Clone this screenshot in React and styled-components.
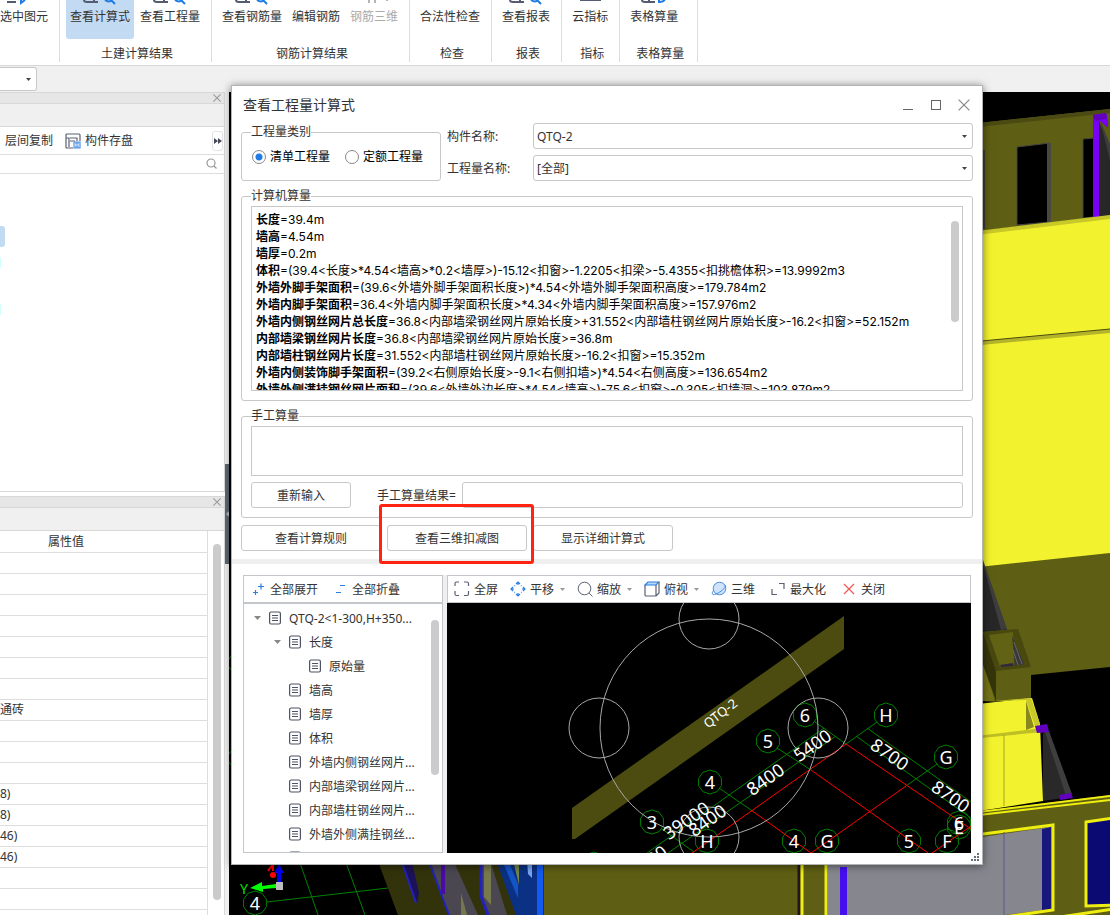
import { useState } from 'react'
import styled, { createGlobalStyle, css } from 'styled-components'

const ribbonGroups = [
	{
		name: '',
		width: 60,
		flush: true,
		buttons: [{ text: '选中图元', icon: 'pick' }],
	},
	{
		name: '土建计算结果',
		buttons: [
			{ text: '查看计算式', icon: 'search', active: true },
			{ text: '查看工程量', icon: 'search' },
		],
	},
	{
		name: '钢筋计算结果',
		buttons: [
			{ text: '查看钢筋量', icon: 'search' },
			{ text: '编辑钢筋', icon: 'none' },
			{ text: '钢筋三维', icon: 'bars', disabled: true },
		],
	},
	{ name: '检查', buttons: [{ text: '合法性检查', icon: 'none' }] },
	{ name: '报表', buttons: [{ text: '查看报表', icon: 'search' }] },
	{ name: '指标', buttons: [{ text: '云指标', icon: 'cloud' }] },
	{
		name: '表格算量',
		width: 78,
		buttons: [{ text: '表格算量', icon: 'sheet' }],
	},
]

const propertyRows = [
	'', '', '', '', '', '', '', '通砖', '', '', '',
	'8)', '8)', '46)', '46)', '', '', '',
]

const reportLines = [
	['长度', '39.4m'],
	['墙高', '4.54m'],
	['墙厚', '0.2m'],
	['体积', '(39.4<长度>*4.54<墙高>*0.2<墙厚>)-15.12<扣窗>-1.2205<扣梁>-5.4355<扣挑檐体积>=13.9992m3'],
	['外墙外脚手架面积', '(39.6<外墙外脚手架面积长度>)*4.54<外墙外脚手架面积高度>=179.784m2'],
	['外墙内脚手架面积', '36.4<外墙内脚手架面积长度>*4.34<外墙内脚手架面积高度>=157.976m2'],
	['外墙内侧钢丝网片总长度', '36.8<内部墙梁钢丝网片原始长度>+31.552<内部墙柱钢丝网片原始长度>-16.2<扣窗>=52.152m'],
	['内部墙梁钢丝网片长度', '36.8<内部墙梁钢丝网片原始长度>=36.8m'],
	['内部墙柱钢丝网片长度', '31.552<内部墙柱钢丝网片原始长度>-16.2<扣窗>=15.352m'],
	['外墙内侧装饰脚手架面积', '(39.2<右侧原始长度>-9.1<右侧扣墙>)*4.54<右侧高度>=136.654m2'],
	['外墙外侧满挂钢丝网片面积', '(39.6<外墙外边长度>*4.54<墙高>)-75.6<扣窗>-0.305<扣墙洞>=103.879m2'],
]

const treeItems = [
	{ text: 'QTQ-2<1-300,H+350...', level: 0, open: true },
	{ text: '长度', level: 1, open: true },
	{ text: '原始量', level: 2 },
	{ text: '墙高', level: 1 },
	{ text: '墙厚', level: 1 },
	{ text: '体积', level: 1 },
	{ text: '外墙内侧钢丝网片...', level: 1 },
	{ text: '内部墙梁钢丝网片...', level: 1 },
	{ text: '内部墙柱钢丝网片...', level: 1 },
	{ text: '外墙外侧满挂钢丝...', level: 1 },
	{ text: '外墙装饰面积', level: 1 },
]

const viewTools = [
	{ text: '全屏', icon: 'full' },
	{ text: '平移', icon: 'move', menu: true },
	{ text: '缩放', icon: 'zoom', menu: true },
	{ text: '俯视', icon: 'cube', menu: true },
	{ text: '三维', icon: 'sphere' },
	{ text: '最大化', icon: 'max', apart: true },
	{ text: '关闭', icon: 'close', apart: true },
]

const axisMarks = [
	['6', 805, 715], ['H', 886, 715], ['5', 768, 741], ['G', 946, 757],
	['4', 710, 782], ['3', 652, 822], ['H', 707, 841], ['4', 794, 841],
	['G', 827, 841], ['5', 909, 841], ['F', 947, 841], ['6', 959, 823], ['E', 959, 827],
]

const dimensions = [
	['5400', 812, 745, -35], ['8400', 765, 779, -35], ['39000', 686, 820, -35],
	['8400', 707, 820, -35], ['8400', 648, 861, -35],
	['8700', 890, 754, 35], ['8700', 951, 796, 35],
]

const octagon = (x, y, r) =>
	Array.from({ length: 10 }, (_, i) => {
		const a = (Math.PI / 5) * i + 0.3
		return `${x + r * Math.cos(a)},${y + r * Math.sin(a)}`
	}).join(' ')

const RibbonIcon = ({ type }) => (
	<svg width='34' height='8' viewBox='0 0 34 8' fill='none' strokeWidth='2'>
		{type === 'search' && (
			<>
				<path d='M1 0Q1 2 4 2H15M11 0V2' stroke='#555b70' />
				<path d='M22 0Q26 3 29 0M28 0L32 4' stroke='#1f7be6' />
			</>
		)}
		{type === 'pick' && (
			<>
				<path d='M0 2H9' stroke='#555b70' />
				<path d='M14 -1V3L18 0' stroke='#1f7be6' />
			</>
		)}
		{type === 'bars' && <path d='M12 0V3M18 0V3M30 0V1' stroke='#b5b5b5' />}
		{type === 'cloud' && <path d='M7 0H28' stroke='#555b70' />}
		{type === 'sheet' && (
			<>
				<path d='M5 0Q5 2 8 2H18M12 0V2' stroke='#555b70' />
				<path d='M22 -1V2Q27 2 28 -1' stroke='#1f7be6' />
			</>
		)}
	</svg>
)

const Cross = ({ size = 8, color = '#999', stroke = 1.3 }) => (
	<svg width={size} height={size} viewBox='0 0 10 10' fill='none' stroke={color} strokeWidth={stroke}>
		<path d='M0.5 0.5L9.5 9.5M9.5 0.5L0.5 9.5' />
	</svg>
)

const Caret = ({ color = '#444', size = 5, height = 3 }) => (
	<svg width={size} height={height} viewBox='0 0 6 3' preserveAspectRatio='none'>
		<path d='M0 0H6L3 3Z' fill={color} />
	</svg>
)

const ToolIcon = ({ type }) => (
	<svg width='16' height='16' viewBox='0 0 16 16' fill='none' stroke='#5b6172' strokeWidth='1.2'>
		{type === 'full' && (
			<path d='M1 5V2.5Q1 1 2.5 1H5M10 1H13Q14.5 1 14.5 2.5V5M14.5 10V13Q14.5 14.5 13 14.5H10M5 14.5H2.5Q1 14.5 1 13V10' />
		)}
		{type === 'move' && (
			<path
				stroke='#2b7fe0'
				d='M8 1V4M6 3L8 1L10 3M8 15V12M6 13L8 15L10 13M1 8H4M3 6L1 8L3 10M15 8H12M13 6L15 8L13 10M4.500 5L5 4.500M11.500 5L11 4.500M4.500 11L5 11.500M11.500 11L11 11.500'
			/>
		)}
		{type === 'zoom' && (
			<>
				<circle cx='7.500' cy='7.500' r='6.300' strokeWidth='1' />
				<path d='M12 12L15.500 15.500' strokeWidth='1' />
			</>
		)}
		{type === 'cube' && (
			<>
				<path d='M1 4L4 1H15L12 4Z' fill='#b9d8f8' stroke='#2b7fe0' />
				<path d='M1 4V14Q1 15 2 15H11Q12 15 12 14V4M12 15L15 12V1' />
			</>
		)}
		{type === 'sphere' && (
			<g stroke='#4a90e2' strokeWidth='1'>
				<circle cx='8.500' cy='7.500' r='6.300' fill='#cfe3fa' />
				<path d='M3 9Q0 12.500 2 13.500Q5 14 11 9.500Q15 6 14.500 4' />
			</g>
		)}
		{type === 'max' && <path d='M2 8V13.500H7M9 2.500H14V8' />}
		{type === 'close' && <path d='M3 3L13 13M13 3L3 13' stroke='#f25555' />}
		{type === 'expand' && <path stroke='#2b7fe0' d='M8 5.500H14M11 2.500V8.500M3 11.500H8M5.500 9V14' />}
		{type === 'collapse' && <path stroke='#2b7fe0' d='M8 4.500H13M4 11.500H9' />}
		{type === 'save' && (
			<>
				<path d='M8 15H2Q1 15 1 14V2Q1 1 2 1H14Q15 1 15 2V8M1 5H4V14M5 5H12V8M5 8H10' />
				<path d='M9 9H15V15H9ZM11 15V13H13V15M11 9V11H13V9' stroke='#4a90e2' />
			</>
		)}
		{type === 'search' && (
			<>
				<circle cx='7' cy='7' r='4' stroke='#999' />
				<path d='M10 10L12.500 12.500' stroke='#999' />
			</>
		)}
	</svg>
)

const DocIcon = () => (
	<svg width='12' height='14' viewBox='0 0 12 14' fill='none' stroke='#4d5364' strokeWidth='1.200'>
		<rect x='0.600' y='1' width='10.800' height='12' rx='1.500' />
		<path d='M3 4.500H9M3 7H9M3 9.500H9' />
	</svg>
)

const ModelScene = () => (
	<Scene viewBox='229 92 881 823' preserveAspectRatio='xMinYMin slice' aria-hidden='true'>
		<rect x='229' y='92' width='2000' height='2000' fill='#000' />
		{/* far wall with openings */}
		<path d='M960 125L1110 109V216L960 233Z' fill='#5e5e14' />
		<path d='M960 125L1110 109V113L960 129Z' fill='#4a4a12' />
		<path d='M983 150H985V229H983Z' fill='#3c3c3c' />
		<path d='M1017 147L1050 143V222L1017 225Z' fill='#000' stroke='#444' />
		<path d='M1047 143H1051V222L1047 223Z' fill='#484840' />
		<path d='M1083 139L1094 138V217L1083 218Z' fill='#000' stroke='#444' />
		<path d='M1093 115L1106 113L1108 121V128L1100 121L1099 217H1093Z' fill='#7800f5' />
		<path d='M1093 115L1106 113L1107 119L1095 121Z' fill='#6200c0' />
		<path d='M1099 121L1110 150V215L1099 217Z' fill='#272727' />
		<path d='M1100 120L1110 144V160Z' fill='#3d3d3d' />
		{/* slabs */}
		<path d='M960 234L1110 216V332L960 344Z' fill='#f2f22f' />
		<path d='M960 233L1110 215V219L960 237Z' fill='#c8c828' />
		<path d='M960 342L1110 330V554L960 570Z' fill='#f2f22f' />
		<path d='M960 343L1110 329V333L960 347Z' fill='#b4b428' />
		<path d='M960 343L1110 329' stroke='#4c4c12' />
		<path d='M960 569L1110 553V667L983 680Z' fill='#5e5e14' />
		{/* shaft */}
		<path d='M975 540L1007 630L975 634Z' fill='#272727' />
		<path d='M983 564L1001 630L1007 629L983 560Z' fill='#3d3d3d' />
		<path d='M983 632L1018 629L1031 667V699L996 701L983 690Z' fill='#5e5e14' />
		<path d='M983 632L1018 629L1031 667L996 671Z' fill='#48480f' />
		<path d='M989 635L1013 632L1014 664L1000 667Z' fill='#626215' />
		<path d='M1012 636L1024 664L1015 666Z' fill='#383838' />
		<path d='M1014 642L1022 664M1013 650L1018 665' stroke='#666' />
		<path d='M1000 665L1013 663V666L1001 667Z' fill='#32283c' />
		<path d='M983 660L995 701H983Z' fill='#737318' />
		<path d='M983 632L996 671V701L983 665Z' fill='#35350c' />
		{/* lower blocks */}
		<path d='M960 706L1032 698L1040 724L1043 801L960 814Z' fill='#f2f22f' />
		<path d='M983 702L1031 698L1040 724L1036 729L1026 700Z' fill='#c8c828' />
		<path d='M1026 701L1034 727L1026 730Z' fill='#88881d' />
		<path d='M960 738L1043 728V732L960 740Z' fill='#bebe25' />
		<path d='M1004 735V806' stroke='#a6a623' />
		<path d='M1043 733L1048 731L1071 797L1043 801Z' fill='#292929' />
		<path d='M1045 732L1049 731L1072 794L1066 796Z' fill='#3e3e3e' />
		<path d='M1035 726L1047 724L1049 732L1037 733Z' fill='#6200c0' />
		<path d='M1059 795L1071 793L1073 798L1060 800Z' fill='#6200c0' />
		{/* near wall */}
		<path d='M540 850L983 811L1110 795V1600H540Z' fill='#5e5e14' />
		<path d='M970 813L1110 796M970 816L1110 800' stroke='#eeee10' strokeWidth='2' />
		<path d='M828 860L1050 827V909L960 921H828Z' fill='#86868f' />
		<path d='M1042 829L1051 827V909L1042 911Z' fill='#18187c' />
		<path d='M975 835L1053 825V910L970 922' fill='none' stroke='#eeee10' strokeWidth='3' />
		<path d='M1004 832V915' stroke='#5a5a8c' />
		<path d='M1086 822L1120 817V905L1086 906Z' fill='#0a0a72' stroke='#eeee10' strokeWidth='3' />
		<path d='M1060 917L1120 908' stroke='#eeee10' strokeWidth='3' />
		<path d='M799 860V1600' stroke='#241326' strokeWidth='3' />
		<path d='M802 860V1600M826 860V1600' stroke='#eeee10' strokeWidth='3' />
		<path d='M840 867H847V1600H840Z' fill='#4410f0' />
		{/* receding walls */}
		<path d='M370 840L398 915H520L500 840Z' fill='#33330b' />
		<path d='M400 860L417 903L419 893L412 862Z' fill='#1c1259' />
		<path d='M403 865L416 903' stroke='#2222c0' strokeWidth='2' />
		<path d='M430 860L449 915H478L453 860Z' fill='#4a4750' />
		<path d='M461 893L467 915H461Z' fill='#77774c' />
		<path d='M430 864L449 915' stroke='#2222c0' strokeWidth='2' />
		<path d='M443 860V894' stroke='#4a0aa6' strokeWidth='4' />
		<path d='M481 860V896L490 915H507L490 860Z' fill='#4a4750' />
		<path d='M484 860H491V905L484 897Z' fill='#79794e' />
		<path d='M481 860V896L488 915' fill='none' stroke='#2222c0' strokeWidth='3' />
		<path d='M496 860L516 915H544V860Z' fill='#0b3184' />
		<path d='M502 860L518 898V884L508 860Z' fill='#1554c8' />
		<path d='M513 860H519V885Z' fill='#768748' />
		<path d='M527 860H532V878L528 874Z' fill='#78a4f0' />
		<path d='M537 860H543V915H537Z' fill='#145af0' />
		{/* grid and axes */}
		<g stroke='#008200' fill='none'>
			<path d='M267 902L388 888M299 860L318 915M345 860L365 915' />
			<polygon points={octagon(255, 903, 12)} />
			<polygon points={octagon(239, 663, 11)} />
			<polygon points={octagon(239, 758, 11)} />
		</g>
		<path d='M250 888L262 882V886L276 884V888L263 889V892Z' fill='#0f0' />
		<path d='M279 864L284 873H281V883H277V873H274Z' fill='#0000f5' />
		<circle cx='273' cy='875' r='3' fill='#f00' />
		<path d='M268 871L273 864V871' fill='none' stroke='#f00' strokeWidth='2' />
		<path d='M276 882H283V890H276Z' fill='#bdbdbd' />
		<SceneText x='244' y='888' fill='#00e000' $size={14}>Y</SceneText>
		<SceneText x='255' y='903' fill='#fff' $size={18}>4</SceneText>
	</Scene>
)

const DeductionView = () => (
	<Scene viewBox='447 603 524 250' preserveAspectRatio='xMidYMid slice' role='img' aria-label='三维扣减图'>
		<rect x='-500' y='0' width='3000' height='2000' fill='#000' />
		<path d='M844 616V649L575 839H572V808Z' fill='#4c4c10' />
		<path
			d='M815 722L846 744M777 748L811 770M719 788L751 810M662 829L694 852M877 722L846 744M937 764L906 786M824 728L647 853M836 736L668 853M867 728L971 802M856 736L971 818'
			stroke='#008200'
		/>
		<g fill='none' stroke='#008200'>
			{axisMarks.map(([, x, y], index) => (
				<polygon key={index} points={octagon(x, y, 12)} />
			))}
			<polygon points={octagon(594, 864, 12)} />
		</g>
		<path
			d='M846 744L692 853M846 744L971 829M811 770L928 853M906 786L811 853M751 810L811 853M971 826L932 853'
			stroke='#f00'
		/>
		<g fill='none' stroke='#a8a8a8'>
			<circle cx='709' cy='728' r='109' />
			<circle cx='709' cy='619' r='30' />
			<circle cx='599' cy='728' r='30' />
			<circle cx='818' cy='728' r='30' />
			<circle cx='709' cy='837' r='30' />
		</g>
		{axisMarks.map(([text, x, y], index) => (
			<SceneText key={index} x={x} y={y} fill='#fff' $size={18}>{text}</SceneText>
		))}
		{dimensions.map(([text, x, y, angle], index) => (
			<SceneText key={index} x={x} y={y} fill='#fff' $size={18} transform={`rotate(${angle} ${x} ${y})`}>
				{text}
			</SceneText>
		))}
		<SceneText x='720' y='713' fill='#fff' $size={13} transform='rotate(-38 720 713)'>QTQ-2</SceneText>
	</Scene>
)

const Ribbon = () => (
	<RibbonBar>
		{ribbonGroups.map((group, index) => (
			<RibbonGroup key={index} $width={group.width} $flush={group.flush}>
				<div className='buttons'>
					{group.buttons.map((item) => (
						<RibbonButton
							key={item.text}
							disabled={item.disabled}
							$active={item.active}
							$flush={group.flush}>
							<RibbonIcon type={item.icon} />
							{item.text}
						</RibbonButton>
					))}
				</div>
				<p>{group.name}</p>
			</RibbonGroup>
		))}
	</RibbonBar>
)

const SidePanels = () => (
	<Side>
		<Panel>
			<PanelTitle>
				<PlainButton aria-label='关闭面板'><Cross /></PlainButton>
			</PanelTitle>
			<PanelTab />
			<PanelTools>
				<PlainButton>层间复制</PlainButton>
				<PlainButton><ToolIcon type='save' />构件存盘</PlainButton>
				<MoreButton aria-label='更多'>
					<svg width='8' height='6' viewBox='0 0 8 6'>
						<path d='M0 0L4 3L0 6ZM4 0L8 3L4 6Z' fill='#444a5a' />
					</svg>
				</MoreButton>
			</PanelTools>
			<SearchRow>
				<input aria-label='搜索构件' />
				<ToolIcon type='search' />
			</SearchRow>
			<ComponentList>
				<li className='selected' />
				<li />
				<li />
			</ComponentList>
		</Panel>
		<Panel $last>
			<PanelTitle>
				<PlainButton aria-label='关闭面板'><Cross /></PlainButton>
			</PanelTitle>
			<PanelTab />
			<PropertyArea>
				<PropertyTable>
					<thead>
						<tr><th>属性值</th></tr>
					</thead>
					<tbody>
						{propertyRows.map((value, index) => (
							<tr key={index}><td>{value}</td></tr>
						))}
					</tbody>
				</PropertyTable>
				<Track $top={13}><Thumb $height={356} /></Track>
			</PropertyArea>
		</Panel>
	</Side>
)

const SelectBox = ({ id, value }) => (
	<SelectWrap>
		<select id={id} defaultValue={value}>
			<option>{value}</option>
		</select>
		<Caret />
	</SelectWrap>
)

const FormulaDialog = () => {
	const [kind, setKind] = useState('清单工程量')

	return (
		<Dialog role='dialog' aria-labelledby='dialog-title'>
			<TitleBar>
				<h1 id='dialog-title'>查看工程量计算式</h1>
				<PlainButton aria-label='最小化'>
					<svg width='12' height='12'><path d='M1 10.500H11' stroke='#666' /></svg>
				</PlainButton>
				<PlainButton aria-label='最大化窗口'>
					<svg width='12' height='12'><rect x='1.500' y='1.500' width='9' height='9' fill='none' stroke='#666' /></svg>
				</PlainButton>
				<PlainButton aria-label='关闭窗口'><Cross size={12} color='#888' stroke={1} /></PlainButton>
			</TitleBar>
			<Form>
				<FilterRow>
					<Group $narrow>
						<legend>工程量类别</legend>
						<RadioRow>
							{['清单工程量', '定额工程量'].map((item) => (
								<label key={item}>
									<input
										type='radio'
										name='kind'
										checked={kind === item}
										onChange={() => setKind(item)}
									/>
									{item}
								</label>
							))}
						</RadioRow>
					</Group>
					<Fields>
						<label htmlFor='component'>构件名称:</label>
						<SelectBox id='component' value='QTQ-2' />
						<label htmlFor='quantity'>工程量名称:</label>
						<SelectBox id='quantity' value='[全部]' />
					</Fields>
				</FilterRow>
				<Group>
					<legend>计算机算量</legend>
					<Report>
						<div className='lines'>
							{reportLines.map(([name, formula]) => (
								<p key={name}><b>{name}</b>={formula}</p>
							))}
						</div>
						<Track $top={14}><Thumb $height={101} /></Track>
					</Report>
				</Group>
				<Group>
					<legend>手工算量</legend>
					<ManualInput aria-label='手工算量' />
					<ResultRow>
						<Button $width={100}>重新输入</Button>
						<label htmlFor='result'>手工算量结果=</label>
						<input id='result' readOnly />
					</ResultRow>
				</Group>
				<Actions>
					<Button $width={140}>查看计算规则</Button>
					<Highlight><Button $width={140}>查看三维扣减图</Button></Highlight>
					<Button $width={140}>显示详细计算式</Button>
				</Actions>
			</Form>
			<Divider />
			<Viewer>
				<Tree>
					<TreeTools>
						<PlainButton><ToolIcon type='expand' />全部展开</PlainButton>
						<PlainButton><ToolIcon type='collapse' />全部折叠</PlainButton>
					</TreeTools>
					<TreeBody>
						<ul>
							{treeItems.map((item) => (
								<TreeItem key={item.text} $level={item.level}>
									<span className='arrow'>{item.open && <Caret color='#888' size={7} height={4} />}</span>
									<DocIcon />
									<span>{item.text}</span>
								</TreeItem>
							))}
						</ul>
						<Track $top={16}><Thumb $height={155} /></Track>
					</TreeBody>
				</Tree>
				<View>
					<ViewTools>
						{viewTools.map((item) => (
							<ToolButton key={item.text} $apart={item.apart}>
								<ToolIcon type={item.icon} />
								<span>{item.text}</span>
								{item.menu && <Caret color='#999' />}
							</ToolButton>
						))}
					</ViewTools>
					<DeductionView />
				</View>
			</Viewer>
			<Grip width='9' height='9' viewBox='0 0 9 9'>
				<path d='M6 0H8V2H6ZM3 3H5V5H3ZM6 3H8V5H6ZM0 6H2V8H0ZM3 6H5V8H3ZM6 6H8V8H6Z' fill='#6a6f7c' />
			</Grip>
		</Dialog>
	)
}

const App = () => (
	<>
		<GlobalStyle />
		<Page>
			<Ribbon />
			<Strip>
				<select aria-label='楼层'><option /></select>
				<Caret />
			</Strip>
			<Workspace>
				<SidePanels />
				<Splitter>
					<button aria-label='收起面板'>
						<svg width='3' height='6' viewBox='0 0 3 6'><path d='M3 0V6L0 3Z' fill='#b4bac0' /></svg>
					</button>
				</Splitter>
				<Viewport><ModelScene /></Viewport>
			</Workspace>
			<FormulaDialog />
		</Page>
	</>
)

export default App

const GlobalStyle = createGlobalStyle`
	* {
		box-sizing: border-box;
	}
	body {
		margin: 0;
		overflow: hidden;
	}
	body, button, input, select, textarea {
		font-family: 'Noto Sans', 'Noto Sans CJK SC', sans-serif;
		font-size: 12px;
		line-height: 17px;
		color: #333;
	}
	p, h1, ul {
		margin: 0;
		padding: 0;
		list-style: none;
	}
	svg {
		flex: none;
	}
`

const control = css`
	border: 1px solid #c8c8c8;
	border-radius: 3px;
	background: #fff;
	outline: none;
`

const Page = styled.div`
	position: relative;
	display: flex;
	flex-direction: column;
	height: 100vh;
	background: #f0f0f0;
`

const RibbonBar = styled.nav`
	display: flex;
	height: 66px;
	padding-bottom: 3px;
	background: #fff;
	border-bottom: 1px solid #d8d8d8;
	white-space: nowrap;
`

const RibbonGroup = styled.div`
	display: flex;
	flex-direction: column;
	justify-content: space-between;
	min-width: ${({ $width }) => ($width ? `${$width}px` : 'auto')};
	padding: ${({ $flush }) => ($flush ? '0 11px 0 0' : '0 7px 0 6px')};
	border-right: 1px solid #ddd;

	.buttons {
		display: flex;
		gap: 2px;
	}
	p {
		padding-left: 4px;
		text-align: center;
	}
`

const RibbonButton = styled.button`
	display: flex;
	flex-direction: column;
	align-items: center;
	height: 39px;
	padding: ${({ $flush }) => ($flush ? '0' : '0 4px')};
	border: 0;
	border-radius: 0 0 3px 3px;
	background: ${({ $active }) => ($active ? '#c3daf3' : 'transparent')};

	&:disabled {
		color: #aaa;
	}
`

const Strip = styled.div`
	display: grid;
	grid-template-columns: 37px;
	align-items: center;
	height: 26px;
	flex: none;

	select {
		${control}
		grid-area: 1 / 1;
		height: 24px;
		appearance: none;
		border-left: 0;
		border-radius: 0 3px 3px 0;
	}
	svg {
		grid-area: 1 / 1;
		justify-self: end;
		margin-right: 6px;
	}
`

const Workspace = styled.div`
	display: flex;
	flex: 1;
	min-height: 0;
`

const Side = styled.aside`
	display: flex;
	flex-direction: column;
	gap: 4px;
	width: 225px;
	flex: none;
	background: #fff;
`

const Panel = styled.section`
	display: flex;
	flex-direction: column;
	flex: ${({ $last }) => ($last ? '1 1 0' : '0 0 400px')};
	min-height: 0;
	overflow: hidden;
	border: 1px solid #d8d8d8;
	border-left: 0;
	border-bottom-width: ${({ $last }) => ($last ? '0' : '1px')};
`

const PanelTitle = styled.header`
	display: flex;
	justify-content: flex-end;
	align-items: center;
	height: 11px;
	flex: none;
	padding-right: 3px;
	background: #e6e6e6;
	border-bottom: 1px solid #d8d8d8;
`

const PanelTab = styled.div`
	height: 23px;
	flex: none;
	background: #f0f0f0;
	border-bottom: 1px solid #d8d8d8;
`

const PlainButton = styled.button`
	display: flex;
	align-items: center;
	gap: 4px;
	padding: 0;
	border: 0;
	background: none;
	white-space: nowrap;
`

const PanelTools = styled.div`
	display: flex;
	align-items: center;
	gap: 12px;
	height: 28px;
	flex: none;
	padding: 0 1px 0 5px;
	background: #fff;
	border-bottom: 1px solid #ddd;
`

const MoreButton = styled(PlainButton)`
	justify-content: center;
	width: 11px;
	height: 20px;
	margin-left: auto;
	border: 1px solid #e4e4e4;
	border-radius: 3px;
`

const SearchRow = styled.div`
	display: flex;
	align-items: center;
	height: 19px;
	flex: none;
	padding-right: 4px;
	border-bottom: 1px solid #ddd;

	input {
		flex: 1;
		min-width: 0;
		height: 17px;
		border: 0;
		outline: none;
	}
`

const ComponentList = styled.ul`
	display: flex;
	flex-direction: column;
	gap: 36px;
	padding-top: 52px;

	li {
		width: 1px;
		height: 11px;
		background: #d4ffff;
	}
	.selected {
		width: 5px;
		height: 21px;
		margin-bottom: -26px;
		border-radius: 0 3px 3px 0;
		background: #c3daf3;
	}
`

const PropertyArea = styled.div`
	display: flex;
	flex: 1;
	min-height: 0;
`

const PropertyTable = styled.table`
	flex: 1;
	height: max-content;
	border-collapse: collapse;
	border-right: 1px solid #ddd;

	th, td {
		height: 21px;
		padding: 0;
		line-height: 17px;
		border-bottom: 1px solid #ddd;
		font-weight: 400;
	}
	th {
		padding-right: 75px;
	}
`

const Track = styled.div`
	width: 16px;
	flex: none;
	padding: ${({ $top }) => `${$top}px 3px 0 5px`};
`

const Thumb = styled.div`
	height: ${({ $height }) => $height}px;
	border-radius: 4px;
	background: #cbcbcb;
`

const Splitter = styled.div`
	display: flex;
	flex-direction: column;
	width: 4px;
	flex: none;
	background: #f0f0f0;

	button {
		display: flex;
		align-items: center;
		justify-content: flex-end;
		height: 100px;
		margin-top: 372px;
		padding: 0;
		border: 0;
		background: #5b6772;
	}
`

const Viewport = styled.main`
	display: flex;
	flex: 1;
	min-width: 0;
	min-height: 0;
	background: #000;
`

const Scene = styled.svg`
	display: block;
	width: 100%;
	height: 100%;
	min-height: 0;
	flex: 1;
`

const SceneText = styled.text`
	font-size: ${({ $size }) => $size}px;
	text-anchor: middle;
	dominant-baseline: central;
`

const Dialog = styled.section`
	position: absolute;
	top: 85px;
	left: 231px;
	right: 127px;
	min-width: 640px;
	padding-bottom: 11px;
	background: #fff;
	border: 1px solid #b4b4b4;
	box-shadow: 0 1px 8px rgba(0, 0, 0, 0.5);
`

const TitleBar = styled.header`
	display: flex;
	align-items: center;
	gap: 16px;
	height: 37px;
	padding: 0 12px 0 11px;

	h1 {
		flex: 1;
		font-size: 14px;
		line-height: 20px;
		font-weight: 400;
	}
`

const Form = styled.form`
	display: flex;
	flex-direction: column;
	gap: 7px;
	padding: 0 9px;
`

const FilterRow = styled.div`
	display: flex;
	align-items: flex-end;
	gap: 6px;
`

const Group = styled.fieldset`
	width: ${({ $narrow }) => ($narrow ? '200px' : 'auto')};
	min-width: 0;
	margin: 0;
	padding: 2px 9px 9px;
	border: 1px solid #c8c8c8;
	border-radius: 3px;

	legend {
		padding: 0;
		line-height: 16px;
	}
`

const RadioRow = styled.div`
	display: flex;
	align-items: center;
	justify-content: space-between;
	height: 29px;
	padding-right: 8px;
	color: #000;

	label {
		display: flex;
		align-items: center;
		gap: 4px;
	}
	input {
		appearance: none;
		width: 14px;
		height: 14px;
		margin: 0 0 0 1px;
		border: 1px solid #888;
		border-radius: 50%;
		background: #fff;
	}
	input:checked {
		background: radial-gradient(#1f7be6 3px, #fff 4px);
	}
`

const Fields = styled.div`
	display: grid;
	grid-template-columns: 80px 1fr;
	align-items: center;
	gap: 6px;
	flex: 1;
`

const SelectWrap = styled.div`
	display: grid;
	align-items: center;

	select {
		${control}
		grid-area: 1 / 1;
		height: 26px;
		padding: 0 3px;
		appearance: none;
	}
	svg {
		grid-area: 1 / 1;
		justify-self: end;
		margin-right: 6px;
		pointer-events: none;
	}
`

const Report = styled.div`
	display: flex;
	height: 185px;
	overflow: hidden;
	border: 1px solid #c8c8c8;
	font-family: Inter, 'Noto Sans CJK SC', sans-serif;
	color: #000;

	.lines {
		flex: 1;
		min-width: 0;
		padding: 4px;
		white-space: nowrap;
	}
`

const ManualInput = styled.textarea`
	display: block;
	width: 100%;
	height: 50px;
	border: 1px solid #c8c8c8;
	resize: none;
	outline: none;
`

const ResultRow = styled.div`
	display: flex;
	align-items: center;
	gap: 6px;
	margin-top: 6px;

	label {
		margin-left: 20px;
	}
	input {
		${control}
		flex: 1;
		min-width: 0;
		height: 26px;
	}
`

const Button = styled.button.attrs({ type: 'button' })`
	${control}
	width: ${({ $width }) => $width}px;
	height: 26px;
	padding: 0;
`

const Actions = styled.div`
	display: flex;
	gap: 6px;
`

const Highlight = styled.div`
	position: relative;

	&::after {
		content: '';
		position: absolute;
		inset: -21px -7px -13px -8px;
		border: 3px solid #ff2412;
		border-radius: 3px;
		pointer-events: none;
		z-index: 1;
	}
`

const Divider = styled.hr`
	height: 5px;
	margin: 8px 0 11px;
	border: 0;
	background: #efefef;
`

const Viewer = styled.div`
	display: flex;
	gap: 4px;
	height: 278px;
	margin: 0 11px;
	background: #efefef;
`

const Tree = styled.div`
	display: flex;
	flex-direction: column;
	width: 200px;
	flex: none;
	background: #fff;
	border: 1px solid #c3c6ca;
`

const TreeTools = styled.div`
	display: flex;
	align-items: center;
	gap: 14px;
	height: 28px;
	flex: none;
	padding-left: 6px;
	border-bottom: 2px solid #c3c6ca;
`

const TreeBody = styled.div`
	display: flex;
	min-height: 0;
	overflow: hidden;

	ul {
		flex: 1;
		min-width: 0;
		padding-top: 2px;
	}
`

const TreeItem = styled.li`
	display: flex;
	align-items: center;
	height: 24px;
	padding-left: ${({ $level }) => 10 + $level * 20}px;
	white-space: nowrap;

	.arrow {
		display: flex;
		width: 15px;
	}
	svg + span {
		margin-left: 8px;
	}
`

const View = styled.div`
	display: flex;
	flex-direction: column;
	flex: 1;
	min-width: 0;
`

const ViewTools = styled.div`
	display: flex;
	align-items: center;
	gap: 12px;
	height: 28px;
	flex: none;
	padding-left: 6px;
	background: #fff;
	border: 1px solid #c3c6ca;
`

const ToolButton = styled(PlainButton)`
	margin-left: ${({ $apart }) => ($apart ? '3px' : '0')};

	span + svg {
		margin-left: 2px;
	}
`

const Grip = styled.svg`
	position: absolute;
	right: 2px;
	bottom: 2px;
`
